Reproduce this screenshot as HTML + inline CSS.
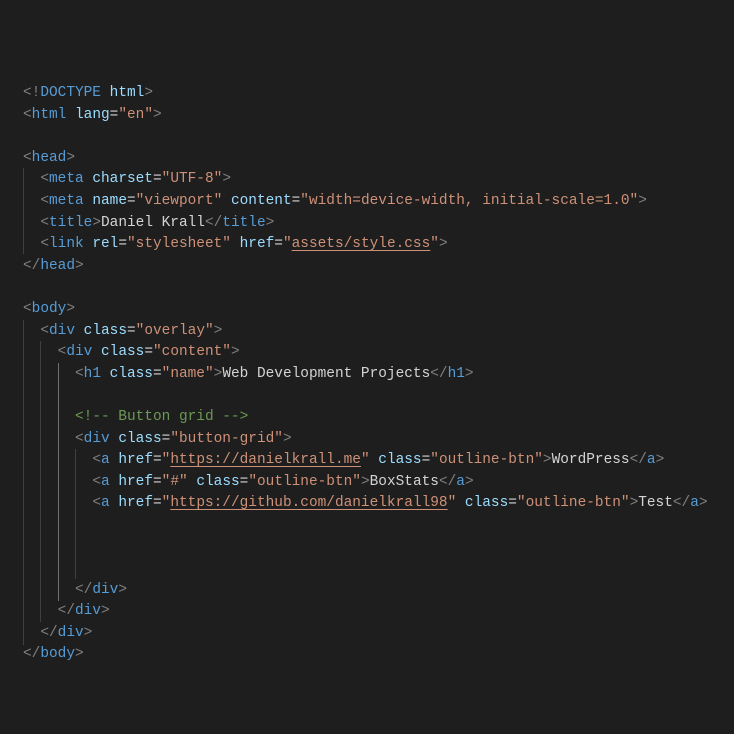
<!DOCTYPE html>
<html><head><style>
body{margin:0;background:#1e1e1e;width:734px;height:734px;overflow:hidden;position:relative}
pre{margin:0;position:absolute;left:23px;top:83px;font-family:"Liberation Mono",monospace;font-size:14.45px;line-height:21.6px;color:#d4d4d4}
.p{color:#808080}.t{color:#569cd6}.a{color:#9cdcfe}.s{color:#ce9178}.c{color:#6a9955}
.u{text-decoration:underline;text-underline-offset:3px}
.g{position:absolute;width:1px;background:#404040}
</style></head><body>
<div class="g" style="left:23px;top:168px;height:86px"></div>
<div class="g" style="left:23px;top:320px;height:325px"></div>
<div class="g" style="left:40px;top:341px;height:281px"></div>
<div class="g" style="left:58px;top:363px;height:238px;background:#707070"></div>
<div class="g" style="left:75px;top:449px;height:130px"></div>
<pre><span class="p">&lt;!</span><span class="t">DOCTYPE</span> <span class="a">html</span><span class="p">&gt;</span>
<span class="p">&lt;</span><span class="t">html</span> <span class="a">lang</span>=<span class="s">"en"</span><span class="p">&gt;</span>

<span class="p">&lt;</span><span class="t">head</span><span class="p">&gt;</span>
  <span class="p">&lt;</span><span class="t">meta</span> <span class="a">charset</span>=<span class="s">"UTF-8"</span><span class="p">&gt;</span>
  <span class="p">&lt;</span><span class="t">meta</span> <span class="a">name</span>=<span class="s">"viewport"</span> <span class="a">content</span>=<span class="s">"width=device-width, initial-scale=1.0"</span><span class="p">&gt;</span>
  <span class="p">&lt;</span><span class="t">title</span><span class="p">&gt;</span>Daniel Krall<span class="p">&lt;/</span><span class="t">title</span><span class="p">&gt;</span>
  <span class="p">&lt;</span><span class="t">link</span> <span class="a">rel</span>=<span class="s">"stylesheet"</span> <span class="a">href</span>=<span class="s">"<span class="u">assets/style.css</span>"</span><span class="p">&gt;</span>
<span class="p">&lt;/</span><span class="t">head</span><span class="p">&gt;</span>

<span class="p">&lt;</span><span class="t">body</span><span class="p">&gt;</span>
  <span class="p">&lt;</span><span class="t">div</span> <span class="a">class</span>=<span class="s">"overlay"</span><span class="p">&gt;</span>
    <span class="p">&lt;</span><span class="t">div</span> <span class="a">class</span>=<span class="s">"content"</span><span class="p">&gt;</span>
      <span class="p">&lt;</span><span class="t">h1</span> <span class="a">class</span>=<span class="s">"name"</span><span class="p">&gt;</span>Web Development Projects<span class="p">&lt;/</span><span class="t">h1</span><span class="p">&gt;</span>

      <span class="c">&lt;!-- Button grid --&gt;</span>
      <span class="p">&lt;</span><span class="t">div</span> <span class="a">class</span>=<span class="s">"button-grid"</span><span class="p">&gt;</span>
        <span class="p">&lt;</span><span class="t">a</span> <span class="a">href</span>=<span class="s">"<span class="u">https://danielkrall.me</span>"</span> <span class="a">class</span>=<span class="s">"outline-btn"</span><span class="p">&gt;</span>WordPress<span class="p">&lt;/</span><span class="t">a</span><span class="p">&gt;</span>
        <span class="p">&lt;</span><span class="t">a</span> <span class="a">href</span>=<span class="s">"#"</span> <span class="a">class</span>=<span class="s">"outline-btn"</span><span class="p">&gt;</span>BoxStats<span class="p">&lt;/</span><span class="t">a</span><span class="p">&gt;</span>
        <span class="p">&lt;</span><span class="t">a</span> <span class="a">href</span>=<span class="s">"<span class="u">https://github.com/danielkrall98</span>"</span> <span class="a">class</span>=<span class="s">"outline-btn"</span><span class="p">&gt;</span>Test<span class="p">&lt;/</span><span class="t">a</span><span class="p">&gt;</span>



      <span class="p">&lt;/</span><span class="t">div</span><span class="p">&gt;</span>
    <span class="p">&lt;/</span><span class="t">div</span><span class="p">&gt;</span>
  <span class="p">&lt;/</span><span class="t">div</span><span class="p">&gt;</span>
<span class="p">&lt;/</span><span class="t">body</span><span class="p">&gt;</span></pre>
</body></html>
